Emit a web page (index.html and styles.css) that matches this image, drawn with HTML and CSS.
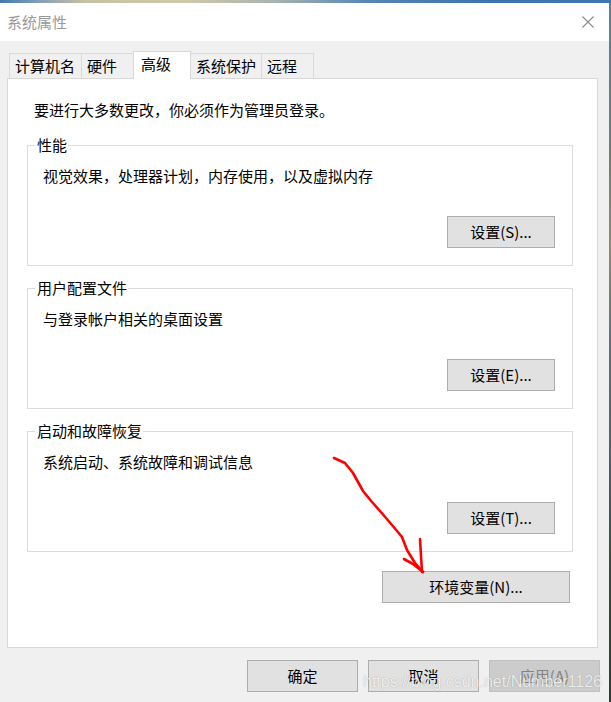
FILE: index.html
```html
<!DOCTYPE html>
<html lang="zh-CN">
<head>
<meta charset="utf-8">
<title>系统属性</title>
<link rel="stylesheet" href="styles.css">
</head>
<body>
<div class="screen">
  <div class="sky"></div>
  <div class="window">
    <div class="titlebar">
      <span class="title">系统属性</span>
      <svg class="close" viewBox="0 0 12 12" width="12" height="12"><path d="M0.5 0.5 L11.5 11.5 M11.5 0.5 L0.5 11.5" stroke="#8a8a8a" stroke-width="1.1" fill="none"/></svg>
    </div>
    <div class="client">
      <div class="tabs">
        <div class="tab w1">计算机名</div>
        <div class="tab w2">硬件</div>
        <div class="tab w3 active">高级</div>
        <div class="tab w4">系统保护</div>
        <div class="tab w5">远程</div>
      </div>
      <div class="panel">
        <p class="intro">要进行大多数更改，你必须作为管理员登录。</p>
        <fieldset class="group">
          <legend>性能</legend>
          <p class="desc">视觉效果，处理器计划，内存使用，以及虚拟内存</p>
          <div class="btn-row"><button class="btn set">设置(S)...</button></div>
        </fieldset>
        <fieldset class="group">
          <legend>用户配置文件</legend>
          <p class="desc">与登录帐户相关的桌面设置</p>
          <div class="btn-row"><button class="btn set">设置(E)...</button></div>
        </fieldset>
        <fieldset class="group">
          <legend>启动和故障恢复</legend>
          <p class="desc">系统启动、系统故障和调试信息</p>
          <div class="btn-row"><button class="btn set">设置(T)...</button></div>
        </fieldset>
        <div class="env-row"><button class="btn env">环境变量(N)...</button></div>
      </div>
      <div class="footer">
        <button class="btn dlg">确定</button>
        <button class="btn dlg">取消</button>
        <button class="btn dlg disabled">应用(A)</button>
      </div>
    </div>
  </div>
  <div class="edge"></div>
</div>
<svg class="arrow" viewBox="0 0 611 702" width="611" height="702">
  <polyline points="334,458 345,463 353,473 363,491 372,502 380,511 392,525 402,537 407,550 415,563 423,572" fill="none" stroke="#ff0000" stroke-width="2.6" stroke-linecap="round" stroke-linejoin="round"/>
  <polyline points="420,539 421,556 422,572" fill="none" stroke="#ff0000" stroke-width="2.6" stroke-linecap="round" stroke-linejoin="round"/>
  <polyline points="404,559 413,564 423,572" fill="none" stroke="#ff0000" stroke-width="2.6" stroke-linecap="round" stroke-linejoin="round"/>
</svg>
<div class="watermark">https://blog.csdn.net/Number1126</div>
</body>
</html>
```

FILE: styles.css
```css
* { box-sizing: border-box; }
html, body { margin: 0; padding: 0; }
body {
  width: 611px;
  height: 702px;
  overflow: hidden;
  position: relative;
  font-family: "Noto Sans CJK SC", "Microsoft YaHei", sans-serif;
  font-size: 15px;
  line-height: 20px;
  color: #000;
  background: #f0f0f0;
}
.screen {
  display: grid;
  grid-template-columns: 609px 2px;
  grid-template-rows: 3px 699px;
}
.sky {
  grid-column: 1 / 3;
  background: linear-gradient(to right, #4579ae 0%, #7f9db5 6%, #c7c2a4 14%, #cfc9a9 30%, #a9b3b0 45%, #5685b5 60%, #3d74ab 80%, #3f76ad 100%);
}
.edge {
  background: linear-gradient(to bottom, #5b7f9e 0%, #6f7b78 20%, #8f8a72 35%, #5c6f7a 50%, #4c5f6a 65%, #3a4a3e 80%, #2e3c36 100%);
}
.window {
  display: flex;
  flex-direction: column;
  background: #f0f0f0;
}
.titlebar {
  height: 38px;
  background: #fff;
  display: flex;
  align-items: center;
  justify-content: space-between;
  padding: 0 15px 0 7px;
}
.title { color: #999999; }
.close { display: block; }
.client {
  flex: 1;
  padding: 10px 9px 0 7px;
}
.tabs {
  display: flex;
  align-items: flex-end;
  height: 27px;
  padding-left: 2px;
}
.tab {
  height: 25px;
  border: 1px solid #d9d9d9;
  border-bottom: 0;
  padding: 2px 0 0 5px;
  margin-left: -1px;
  background: #f0f0f0;
  white-space: nowrap;
}
.tab:first-child { margin-left: 0; }
.w1 { width: 73px; }
.w2 { width: 53px; }
.w3 { width: 58px; }
.w4 { width: 72px; }
.w5 { width: 53px; }
.tab.active {
  height: 28px;
  margin-bottom: -1px;
  background: #fff;
  padding-left: 7px;
  position: relative;
  z-index: 1;
}
.panel {
  width: 591px;
  height: 570px;
  border: 1px solid #d9d9d9;
  background: #fff;
  padding: 21px 24px 0 19px;
}
.intro {
  margin: 0;
  padding-left: 7px;
}
.group {
  margin: 15px 0 0;
  padding: 0 17px 17px 7px;
  border: 1px solid #dcdcdc;
  min-width: 0;
}
.group + .group { margin-top: 12px; }
.group legend {
  padding: 0 1px 0 2px;
  margin: 0;
  line-height: 20px;
}
.desc {
  margin: 11px 0 0;
  padding-left: 8px;
}
.btn-row {
  display: flex;
  justify-content: flex-end;
  margin-top: 30px;
}
.btn {
  font: inherit;
  color: #000;
  background: #e1e1e1;
  border: 1px solid #adadad;
  height: 32px;
  padding: 0;
  margin: 0;
  line-height: 20px;
  text-align: center;
}
.set { width: 108px; }
.env-row {
  display: flex;
  justify-content: flex-end;
  margin-top: 19px;
  padding-right: 3px;
}
.env { width: 188px; }
.footer {
  display: flex;
  justify-content: flex-end;
  gap: 10px;
  margin-top: 12px;
}
.dlg { width: 111px; }
.btn.disabled {
  background: #cccccc;
  border-color: #bfbfbf;
  color: #838383;
}
.arrow {
  position: absolute;
  left: 0;
  top: 0;
  pointer-events: none;
}
.watermark {
  position: absolute;
  left: 363px;
  top: 673px;
  font-family: "Liberation Sans", Arial, sans-serif;
  font-size: 16px;
  line-height: 18px;
  color: rgba(255, 255, 255, 0.85);
  text-shadow: 0 0 1px rgba(0, 0, 0, 0.35);
  white-space: nowrap;
  pointer-events: none;
}
```
